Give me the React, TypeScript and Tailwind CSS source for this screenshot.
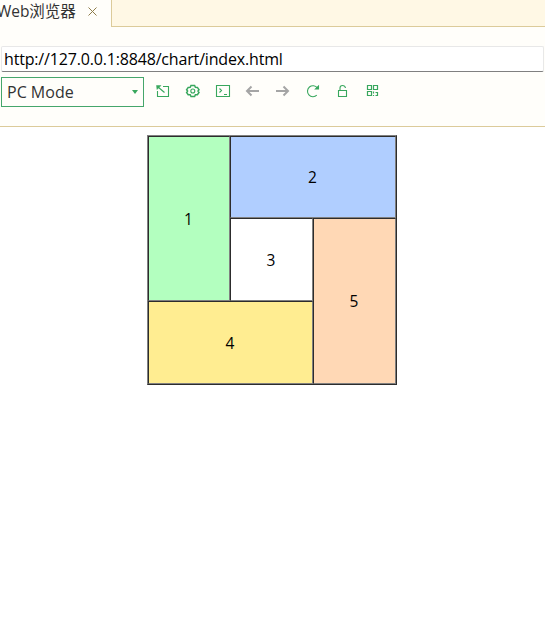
import type { ReactNode } from 'react';

const cell =
  "flex items-center justify-center border border-t-[#2c2c2c] border-l-[#2c2c2c] border-r-[#808080] border-b-[#808080] pr-px font-['Open_Sans',sans-serif] text-[15.5px] text-black";

function Icon({ children, className = 'text-[#38a75d]' }: { children: ReactNode; className?: string }) {
  return (
    <svg width="16" height="16" viewBox="0 0 16 16" fill="none" stroke="currentColor" strokeWidth="1.1" className={className}>
      {children}
    </svg>
  );
}

export default function App() {
  return (
    <div className="flex h-[637px] w-[545px] flex-col overflow-hidden bg-white">
      <header className="flex h-[127px] flex-col border-b border-[#dccb9a] bg-[#fffefa]">
        <div className="flex h-[27px]">
          <div className="flex w-[112px] shrink-0 items-start border-r border-[#dccb9a] text-[#333]">
            <span className="-ml-[3px] w-[79px] whitespace-nowrap font-['Open_Sans','Noto_Sans_CJK_SC',sans-serif] text-[15.5px] leading-[23px] tracking-[-0.05px]">
              Web浏览器
            </span>
            <svg width="9" height="9" viewBox="0 0 9 9" className="ml-[12px] mt-[7px] text-[#8f7d4b]" stroke="currentColor">
              <path d="M.5.5l8 8M8.500.5l-8 8" />
            </svg>
          </div>
          <div className="flex-1 border-b border-[#dccb9a] bg-[#fff8e5]" />
        </div>
        <div className="mt-[19px] ml-px mr-px flex h-[26px] items-center rounded-[2px] border border-[#e8e8e8] border-b-[#808080] bg-white pl-[2px]">
          <span className="whitespace-nowrap font-['Open_Sans',sans-serif] text-[16px] leading-[22px] tracking-[-0.17px] text-black">
            http://127.0.0.1:8848/chart/index.html
          </span>
        </div>
        <div className="mt-[5px] ml-px flex h-[30px] items-start">
          <div className="flex h-[30px] w-[143px] items-center justify-between border border-[#45a66b] pl-[5px] pr-[5px]">
            <span className="font-['Open_Sans',sans-serif] text-[16px] leading-[22px] text-[#333]">PC Mode</span>
            <svg width="6" height="4" viewBox="0 0 6 4" className="text-[#38a75d]" fill="currentColor">
              <path d="M0 0h6L3 4z" />
            </svg>
          </div>
          <div className="ml-[11px] mt-[6px] flex gap-[14px]">
            <Icon>
              <path d="M8 3.500h5.500v10h-11V8M3 4l6.500 5.500" />
              <path d="M1.500 2.500h4.500L2 6.500z" fill="currentColor" strokeWidth=".5" />
            </Icon>
            <Icon>
              <path d="M6 2.500h3.600l.8 1.800 2 .1 1.600 2.300L13 8l1 1.500-1.600 2.200-2 .1-.8 1.700H6l-.8-1.700-2-.1L1.600 9.500l1-1.500-1-1.300 1.600-2.300 2-.1z" strokeWidth="1.500" />
              <circle cx="7.800" cy="8" r="2" />
            </Icon>
            <Icon>
              <path d="M1.500 2.500h13v11h-13zM4.500 5.500l2 2-2 2M9 11.500h3" />
            </Icon>
            <Icon className="text-[#a5a5a5]">
              <path d="M14 8H2M6.500 3.500L2 8l4.500 4.500" strokeWidth="2" />
            </Icon>
            <Icon className="text-[#a5a5a5]">
              <path d="M1 8h12M8.500 3.500L13 8l-4.500 4.500" strokeWidth="2" />
            </Icon>
            <Icon>
              <path d="M12.300 4.800A5.500 5.500 0 1 0 11.800 12.200" />
              <path d="M13.500 3v3H10.500z" fill="currentColor" />
            </Icon>
            <Icon>
              <path d="M3.500 7.500h8v6h-8zM5 7.500V5q0-2.500 2.500-2.500T10.500 5" />
            </Icon>
            <Icon>
              <path d="M2.500 2.500h4v4h-4zM8.500 2.500h4v4h-4zM2.500 8.500h4v4h-4zM8.500 8.500v2M8.500 12v1M10.500 9.500h2v3h-2" strokeWidth="1.200" />
            </Icon>
          </div>
        </div>
      </header>
      <main className="flex justify-center pt-[8px] pr-px">
        <div className="grid size-[250px] grid-cols-[82px_83px_83px] grid-rows-[82px_83px_83px] border border-t-[#808080] border-l-[#808080] border-r-[#2c2c2c] border-b-[#2c2c2c]">
          <div className={`row-span-2 bg-[#b3ffbf] pt-[3px] ${cell}`}>1</div>
          <div className={`col-span-2 bg-[#b0ceff] pt-[2px] ${cell}`}>2</div>
          <div className={`bg-white pt-[3px] ${cell}`}>3</div>
          <div className={`row-span-2 bg-[#ffd8b5] pt-[2px] ${cell}`}>5</div>
          <div className={`col-span-2 bg-[#ffed91] pt-[3px] ${cell}`}>4</div>
        </div>
      </main>
    </div>
  );
}
